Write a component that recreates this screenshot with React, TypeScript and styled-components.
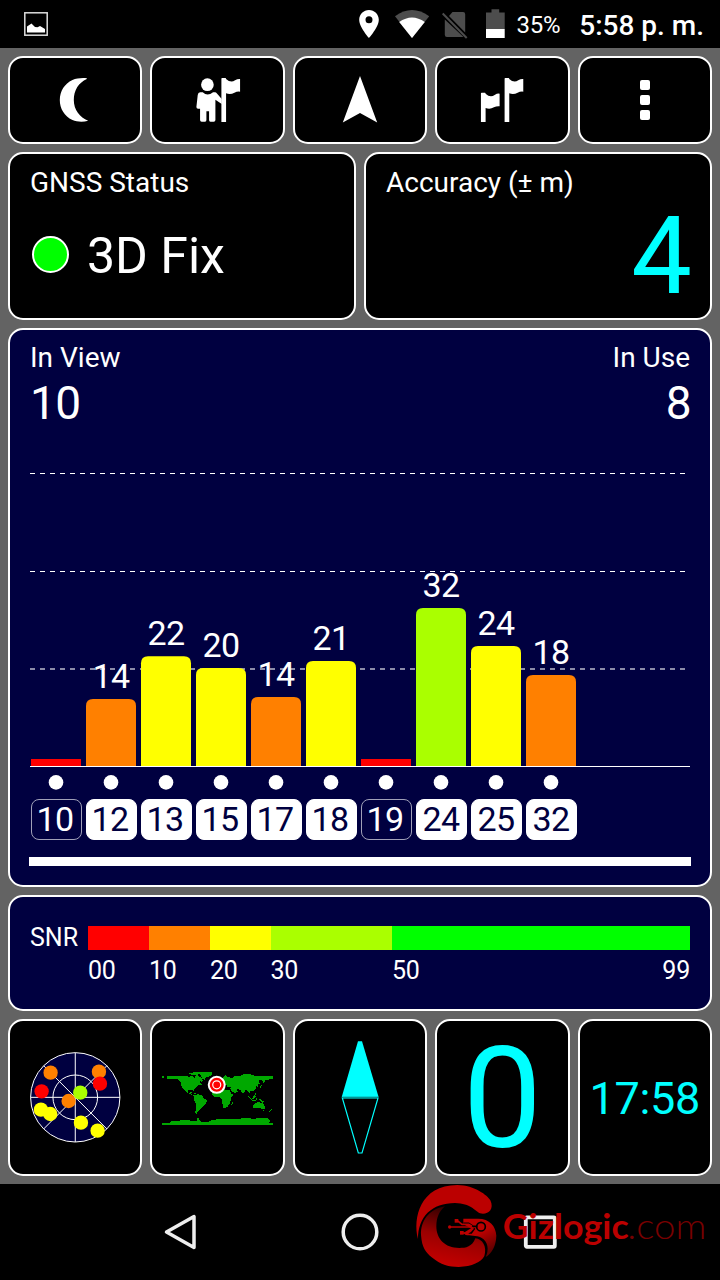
import React from "react";
import styled, { createGlobalStyle } from "styled-components";

const GlobalStyle = createGlobalStyle`
  html, body { margin: 0; padding: 0; background: #000; }
  * { box-sizing: border-box; }
  svg { display: block; flex: none; }
`;

const Screen = styled.div`
  width: 720px;
  height: 1280px;
  display: flex;
  flex-direction: column;
  background: #000;
  color: #fff;
  font-family: Roboto, "Liberation Sans", sans-serif;
  overflow: hidden;
`;

const StatusBar = styled.header`
  height: 48px;
  flex: none;
  display: flex;
  align-items: center;
  padding: 0 16px 0 24px;
`;

const StatusIcons = styled.div`
  margin-left: auto;
  display: flex;
  align-items: center;
`;

const Battery = styled.span`
  font-size: 24px;
  line-height: 48px;
  margin-left: 12px;
  padding-top: 2px;
  letter-spacing: -0.3px;
`;

const Clock = styled.span`
  font-size: 28px;
  font-weight: 500;
  line-height: 48px;
  margin-left: 19px;
  padding-top: 3px;
`;

const Dashboard = styled.main`
  flex: none;
  height: 1136px;
  background: #636363;
  padding: 8px;
  display: grid;
  grid-template-rows: 88px 168px 559px 116px 157px;
  gap: 8px;
`;

const Row = styled.div<{ $cols: number }>`
  display: grid;
  grid-template-columns: repeat(${(p) => p.$cols}, minmax(0, 1fr));
  gap: 8px;
`;

const Card = styled.section<{ $navy?: boolean }>`
  border: 2px solid #fff;
  border-radius: 15px;
  background: ${(p) => (p.$navy ? "#000040" : "#000")};
  min-width: 0;
`;

const Tile = styled(Card)`
  display: flex;
  align-items: center;
  justify-content: center;
`;

const InfoCard = styled(Card)`
  padding: 13px 20px 0;
  display: flex;
  flex-direction: column;
`;

const Title = styled.div`
  font-size: 28px;
  line-height: 32px;
  white-space: nowrap;
`;

const FixRow = styled.div`
  display: flex;
  align-items: center;
  gap: 18px;
  margin: 27px 0 0 2px;
  font-size: 50px;
  line-height: 60px;
`;

const FixLamp = styled.span`
  width: 37px;
  height: 37px;
  border-radius: 50%;
  border: 2px solid #fff;
  background: #0f0;
  margin-bottom: 4px;
`;

const Accuracy = styled.div`
  align-self: flex-end;
  font-size: 108px;
  line-height: 100px;
  margin-top: 7px;
  margin-right: -2px;
  color: #0ff;
`;

const SignalPanel = styled(Card)`
  padding: 12px 20px 0;
`;

const Counts = styled.div`
  display: flex;
  justify-content: space-between;
`;

const Count = styled.div<{ $right?: boolean }>`
  text-align: ${(p) => (p.$right ? "right" : "left")};
`;

const CountValue = styled.div`
  font-size: 46px;
  line-height: 50px;
  margin: 4px -1px 1px 0;
  letter-spacing: -0.5px;
`;

const Chips = styled.div`
  display: flex;
  gap: 4px;
  margin-left: 0.5px;
`;

const Chip = styled.span<{ $used: boolean; $shift: number }>`
  width: 51px;
  height: 41px;
  border-radius: 8px;
  border: 1px solid ${(p) => (p.$used ? "#fff" : "#a0a0b8")};
  background: ${(p) => (p.$used ? "#fff" : "transparent")};
  color: ${(p) => (p.$used ? "#000040" : "#fff")};
  font-size: 34px;
  line-height: 39px;
  letter-spacing: -0.5px;
  text-align: center;
  padding-right: ${(p) => p.$shift}px;
`;

const ScrollTrack = styled.div`
  height: 9px;
  margin: 17px -1px 0;
  background: #fff;
`;

const SnrPanel = styled(Card)`
  padding: 29px 20px 0;
  display: grid;
  grid-template-columns: 58px 1fr;
  grid-template-rows: 24px 30px;
  row-gap: 5px;
  font-size: 25px;
`;

const SnrLabel = styled.div`
  line-height: 23px;
`;

const SnrTrack = styled.div`
  display: flex;
  grid-column: 2;
`;

const SnrSegment = styled.div<{ $size: number; $color?: string }>`
  flex: ${(p) => p.$size} 0 0;
  min-width: 0;
  background: ${(p) => p.$color ?? "transparent"};
  display: flex;
  justify-content: space-between;
  line-height: 32px;
  letter-spacing: -0.2px;
`;

const Speed = styled.span`
  font-size: 141px;
  line-height: 150px;
  padding-top: 3px;
  color: #0ff;
`;

const LocalTime = styled.span`
  font-size: 45px;
  line-height: 50px;
  padding-top: 2px;
  letter-spacing: -0.3px;
  color: #0ff;
`;

const NavBar = styled.footer`
  position: relative;
  height: 96px;
  flex: none;
  display: flex;
  justify-content: center;
  align-items: center;
  gap: 140px;
`;

const Watermark = styled.svg`
  position: absolute;
  left: 400px;
  top: -9px;
`;

const satellites = [
  { id: "10", snr: null, top: 759, color: "#f00", used: false },
  { id: "12", snr: 14, top: 699, color: "#ff8000", used: true },
  { id: "13", snr: 22, top: 656.3, color: "#ff0", used: true },
  { id: "15", snr: 20, top: 668, color: "#ff0", used: true },
  { id: "17", snr: 14, top: 697, color: "#ff8000", used: true },
  { id: "18", snr: 21, top: 661, color: "#ff0", used: true },
  { id: "19", snr: null, top: 759, color: "#f00", used: false },
  { id: "24", snr: 32, top: 608, color: "#af0", used: true },
  { id: "25", snr: 24, top: 646, color: "#ff0", used: true },
  { id: "32", snr: 18, top: 675, color: "#ff8000", used: true },
];

const snrScale = [
  { size: 61, color: "#f00", labels: ["00"] },
  { size: 61, color: "#ff8000", labels: ["10"] },
  { size: 60.5, color: "#ff0", labels: ["20"] },
  { size: 121.5, color: "#af0", labels: ["30"] },
  { size: 298, color: "#0f0", labels: ["50", "99"] },
];

const SignalChart = () => (
  <svg width="660" height="370" viewBox="30 430 660 370">
    <g stroke="#fff" strokeDasharray="5 5">
      <path d="M30 474.500H686" />
      <path d="M30 572.500H686" />
      <path d="M30 670H686" strokeWidth="2" opacity=".55" />
    </g>
    <g transform="translate(0 1)">
      {satellites.map((s, i) => {
        const x = 31 + i * 55;
        return (
          <g key={s.id}>
            {s.snr === null ? (
              <rect x={x} y={s.top} width="50" height="7.500" fill={s.color} />
            ) : (
              <path
                d={`M${x} 766.5V${s.top + 7}q0 -7 7 -7h36q7 0 7 7V766.5z`}
                fill={s.color}
              />
            )}
            {s.snr !== null && (
              <text
                x={x + 25}
                y={s.top - 11.3}
                fontSize="34"
                letterSpacing="-.5"
                fill="#fff"
                textAnchor="middle"
              >
                {s.snr}
              </text>
            )}
            <circle cx={x + 25} cy="782.400" r="7.300" fill="#fff" />
          </g>
        );
      })}
      <path d="M30 766.500H690" stroke="#fff" />
    </g>
  </svg>
);

const PictureIcon = () => (
  <svg width="24" height="24" viewBox="0 0 24 24">
    <rect x=".8" y=".8" width="22.400" height="22.400" fill="none" stroke="#ddd" strokeWidth="1.500" />
    <path d="M3 20.500V14.500L7.500 11.500L11 15L13.500 15.200L16 14L18.500 15.500L21 17V20.500z" fill="#fff" />
  </svg>
);

const StatusGlyphs = () => (
  <svg width="150" height="48" viewBox="355 0 150 48">
    <path
      transform="translate(352.200 7.200) scale(1.400)"
      fill="#fff"
      d="M12 2C8.130 2 5 5.130 5 9c0 5.250 7 13 7 13s7-7.750 7-13c0-3.870-3.130-7-7-7zm0 9.500a2.500 2.500 0 0 1 0-5 2.500 2.500 0 0 1 0 5z"
    />
    <path d="M412 38L395 16.300Q412 3.700 429.200 16.300z" fill="#4d4d4d" />
    <path d="M412 38L399.200 22Q412 13 424.800 22z" fill="#fff" />
    <path d="M444.800 19.500L463.500 37H447Q444.800 37 444.800 34.800zM452.500 12H463Q465.200 12 465.200 14.200V32.500L449 16z" fill="#4d4d4d" />
    <path d="M442.700 13.500L466.700 38" stroke="#4d4d4d" strokeWidth="2" />
    <path d="M486 29V12.500H491.500V9.200H499.200V12.500H504.700V29z" fill="#4d4d4d" />
    <path d="M486 29H504.700V38H486z" fill="#fff" />
  </svg>
);

const MoonIcon = () => (
  <svg width="48" height="48" viewBox="153.600 228 144 144">
    <path
      fill="#fff"
      d="M261 235C248 233 230 235 218 240C194 251 180 274 180 300C180 326 194 349 218 360C232 366 250 367 265 362C240 352 222 330 222 300C222 270 237 248 261 237z"
    />
  </svg>
);

const PersonFlagIcon = () => (
  <svg width="48" height="48" viewBox="580.800 228 144 144">
    <g fill="#fff">
      <circle cx="621" cy="254" r="19" />
      <path d="M599 277h8q14 13 31 0h6q3 0 5 3l15 17v15l-19-13v61q0 5-5 5h-10q-4 0-4-5v-26h-8v26q0 5-4 5h-10q-5 0-5-5v-34h-6q-5 0-5-5l4-36q1-8 7-8z" />
      <path d="M663 236q0-2 2-2h10q2 0 2 3q14 13 27 4q8-5 15-4v38q-9-1-17 3q-12 7-25 2v86h-14z" />
    </g>
  </svg>
);

const ArrowIcon = () => (
  <svg width="52" height="52" viewBox="0 0 52 52">
    <path d="M26 2L43.200 48.500L26 39L8.800 48.500z" fill="#fff" />
  </svg>
);

const FlagsIcon = () => (
  <svg width="48" height="48" viewBox="355.200 228 144 144">
    <g fill="#fff">
      <path d="M435 236q0-2 2-2h10q2 0 2 3q14 13 27 4q8-5 15-4v38q-9-1-17 3q-12 7-25 2v86h-14z" />
      <path d="M364 280q0-2 2-2h10q2 0 2 3q14 13 27 4q8-5 15-4v38q-9-1-17 3q-12 7-25 2v42h-14z" />
    </g>
  </svg>
);

const MenuIcon = () => (
  <svg width="10" height="40" viewBox="0 0 10 40">
    {[0, 15, 30].map((y) => (
      <rect key={y} y={y} width="10" height="10" rx="2" fill="#fff" />
    ))}
  </svg>
);

const skyDots: [number, number, string][] = [
  [152, 188, "#ff8000"],
  [297, 185, "#ff8000"],
  [300, 221, "#f00"],
  [125, 244, "#f00"],
  [206, 273, "#ff8000"],
  [241, 248, "#af0"],
  [123, 299, "#ff0"],
  [151, 312, "#ff0"],
  [243, 338, "#ff0"],
  [293, 362, "#ff0"],
];

const SkyView = () => (
  <svg width="96" height="96" viewBox="81.200 120 288 288">
    <g fill="none" stroke="#fff" strokeWidth="3">
      <circle cx="226" cy="262" r="134" fill="#000040" />
      <circle cx="226" cy="262" r="67" />
      <path d="M226 128V396M92 262H360M131 167L321 357M321 167L131 357" />
    </g>
    {skyDots.map(([x, y, c]) => (
      <circle key={`${x}-${y}`} cx={x} cy={y} r="21.500" fill={c} />
    ))}
  </svg>
);

const WorldMap = () => (
  <svg width="114" height="60" viewBox="481.800 173.500 342 180">
    <g fill="#00a800" shapeRendering="crispEdges">
      <path d="M500 198L520 197L545 199L556 196L566 201L574 197L582 203L588 197L594 206L600 211L597 216L606 223L594 226L588 231L581 236L579 244L574 238L564 240L562 247L568 248L571 244L575 246L571 251L580 256L586 254L583 258L573 254L560 248L553 240L546 233L541 223L540 213L532 208L518 205L509 208L500 206z" />
      <path d="M556 192L566 190L572 187H600L594 193L583 195L572 193zM486 196h6v7h-6zM583 197L592 195L602 203L608 210L603 215L595 208zM575 249L588 250L594 253L585 251z" />
      <path d="M578 186H636L634 194L626 200L618 201L612 209L606 206L602 197L596 190L578 189z" />
      <path d="M584 254L594 252L607 257L610 264L621 270L617 280L611 287L604 293L598 299L591 305L589 312L585 308L586 296L588 281L580 271L580 261z" />
      <path d="M634 247L640 238L650 234L675 238L688 240L692 251L699 253L691 265L690 276L683 288L676 294L669 293L666 281L665 268L658 260L645 261L635 255zM694 276l5-2l-3 10l-3 2z" />
      <path d="M668 200L676 195L680 199L696 204L704 197L718 199L727 193L740 190L753 193L765 197L790 196L818 199V206L806 208L796 210L790 219L785 209L773 212L779 220L771 224L775 231L768 228L765 238L756 244L749 241L750 252L743 244L737 238L731 248L727 251L720 239L709 237L712 244L703 250L694 242L690 237L691 231L681 230L678 224L671 228L665 229L659 218L667 211z" />
      <path d="M757 287L764 281L769 277L778 275L782 279L786 274L790 284L795 290L792 297L784 298L777 292L764 294L757 293zM788 299h4v3h-4zM811 298l5-2l-2 4l-6 5l-2-2z" />
      <path d="M743 256l5 4l7 9l-3 0l-9-9zM757 259l7-5l2 5l-5 8l-5-2zM756 270l10 1l1 2l-11-1zM766 262h4v6h-4zM773 265l9 3l9 7l-8-1l-8-5zM763 249h3v4h-3zM778 234l3-8l5-3l-4 9z" />
      <path d="M486 345V340L508 338L512 333L531 332L552 329L575 332L590 331L591 325L598 319L595 329L605 336L623 335L635 329L660 327L690 326L715 326L735 323L760 326L785 323L804 325L811 332L806 337L818 340V345z" />
    </g>
    <g stroke="#fff">
      <circle cx="649" cy="224" r="24" fill="#f00" strokeWidth="6" />
      <circle cx="649" cy="224" r="12" fill="none" strokeWidth="3.500" />
    </g>
  </svg>
);

const CompassNeedle = () => (
  <svg width="40" height="116" viewBox="165 90 120 348">
    <path d="M219 94H231L281 262H170z" fill="#0ff" />
    <path d="M172 264H279L231 429H220z" fill="#000" stroke="#0ff" strokeWidth="3.500" />
    <path d="M172 261H279" stroke="#008a8a" strokeWidth="2" />
  </svg>
);

const BrandWatermark = () => (
  <Watermark width="320" height="105" viewBox="0 0 960 315">
    <defs>
      <linearGradient id="lower" x1=".3" y1="1" x2=".55" y2="0">
        <stop offset="0" stopColor="#c80000" />
        <stop offset=".5" stopColor="#9a0000" />
        <stop offset="1" stopColor="#250000" />
      </linearGradient>
      <linearGradient id="right" x1="0" y1="0" x2=".5" y2="1">
        <stop offset=".5" stopColor="#bb0000" />
        <stop offset="1" stopColor="#600000" />
      </linearGradient>
    </defs>
    <path
      d="M54 192C38 130 60 30 172 30C225 31 262 61 271 76C285 106 260 121 240 115C222 106 214 86 165 84C96 84 54 125 54 192z"
      fill="#bb0000"
    />
    <path
      d="M135 94C85 103 62 138 63 180C66 220 78 232 95 247C122 270 148 276 176 276C216 274 244 262 253 243C262 214 247 192 226 190C216 216 198 219 178 219C134 219 109 191 109 154C109 126 119 107 135 94z"
      fill="url(#lower)"
    />
    <path
      d="M190 131H232C268 130 288 154 289 182C288 212 276 235 257 246C268 224 264 198 244 188C228 180 210 183 197 180L190 174L213 160L190 148z"
      fill="url(#right)"
    />
    <g fill="none" stroke="#000" strokeWidth="5">
      <path d="M190 145H206L220 154H232M205 174H214L224 160" />
      <circle cx="243" cy="155" r="13" />
    </g>
    <g fill="none" stroke="#bb0000" strokeWidth="5">
      <path d="M150 156H212M172 137L186 148H206L216 154M186 174H204L220 160" />
    </g>
    <g fill="#bb0000">
      <circle cx="149" cy="156" r="5" />
      <rect x="164" y="132" width="11" height="11" />
      <rect x="180" y="168" width="11" height="11" />
      <circle cx="243" cy="155" r="8" />
    </g>
    <g fontFamily="Lato, sans-serif" fontSize="104">
      <text x="308" y="191" fontWeight="700" fill="#bb0000" textLength="378" lengthAdjust="spacingAndGlyphs">
        Gizlogic
      </text>
      <text x="682" y="191" fontWeight="300" fill="#780000" textLength="237" lengthAdjust="spacingAndGlyphs">
        .com
      </text>
    </g>
  </Watermark>
);

export default function App() {
  return (
    <Screen>
      <GlobalStyle />
      <StatusBar>
        <PictureIcon />
        <StatusIcons>
          <StatusGlyphs />
          <Battery>35%</Battery>
          <Clock>5:58 p. m.</Clock>
        </StatusIcons>
      </StatusBar>
      <Dashboard>
        <Row $cols={5}>
          <Tile><MoonIcon /></Tile>
          <Tile><PersonFlagIcon /></Tile>
          <Tile><ArrowIcon /></Tile>
          <Tile><FlagsIcon /></Tile>
          <Tile><MenuIcon /></Tile>
        </Row>
        <Row $cols={2}>
          <InfoCard>
            <Title>GNSS Status</Title>
            <FixRow>
              <FixLamp />
              3D Fix
            </FixRow>
          </InfoCard>
          <InfoCard>
            <Title>Accuracy (± m)</Title>
            <Accuracy>4</Accuracy>
          </InfoCard>
        </Row>
        <SignalPanel $navy>
          <Counts>
            <Count>
              <Title>In View</Title>
              <CountValue>10</CountValue>
            </Count>
            <Count $right>
              <Title>In Use</Title>
              <CountValue>8</CountValue>
            </Count>
          </Counts>
          <SignalChart />
          <Chips>
            {satellites.map((s) => (
              <Chip key={s.id} $used={s.used} $shift={s.id.startsWith("1") ? 2 : 0}>
                {s.id}
              </Chip>
            ))}
          </Chips>
          <ScrollTrack />
        </SignalPanel>
        <SnrPanel $navy>
          <SnrLabel>SNR</SnrLabel>
          <SnrTrack>
            {snrScale.map((s) => (
              <SnrSegment key={s.color} $size={s.size} $color={s.color} />
            ))}
          </SnrTrack>
          <SnrTrack>
            {snrScale.map((s) => (
              <SnrSegment key={s.color} $size={s.size}>
                {s.labels.map((l) => (
                  <span key={l}>{l}</span>
                ))}
              </SnrSegment>
            ))}
          </SnrTrack>
        </SnrPanel>
        <Row $cols={5}>
          <Tile><SkyView /></Tile>
          <Tile><WorldMap /></Tile>
          <Tile><CompassNeedle /></Tile>
          <Tile><Speed>0</Speed></Tile>
          <Tile><LocalTime>17:58</LocalTime></Tile>
        </Row>
      </Dashboard>
      <NavBar>
        <svg width="40" height="40" viewBox="0 0 40 40">
          <path d="M6.500 20L34 4.500V35.500z" fill="none" stroke="#eee" strokeWidth="3.500" strokeLinejoin="round" />
        </svg>
        <svg width="40" height="40" viewBox="0 0 40 40">
          <circle cx="20" cy="20" r="16.800" fill="none" stroke="#eee" strokeWidth="3.500" />
        </svg>
        <svg width="40" height="40" viewBox="0 0 40 40">
          <rect x="5.800" y="5.300" width="29" height="29.500" rx="1" fill="none" stroke="#eee" strokeWidth="3.800" />
        </svg>
        <BrandWatermark />
      </NavBar>
    </Screen>
  );
}
